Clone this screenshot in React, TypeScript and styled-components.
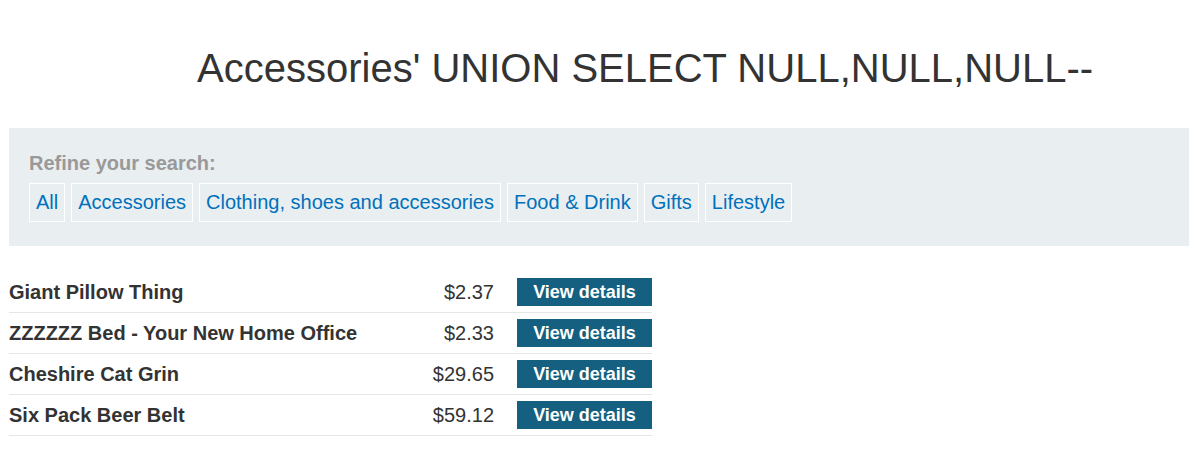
import styled, { createGlobalStyle } from "styled-components";

const GlobalStyle = createGlobalStyle`
  body {
    margin: 0;
    background: #ffffff;
    font-family: "Liberation Sans", Arial, sans-serif;
    color: #333333;
  }
`;

const Page = styled.div`
  padding-left: 9px;
`;

const Title = styled.h1`
  margin: 0;
  padding: 44px 0 36px 188px;
  font-size: 40px;
  line-height: 48px;
  font-weight: normal;
  color: #333333;
`;

const FilterPanel = styled.section`
  background-color: #e9eef1;
  padding: 24px 20px 24px;
`;

const FilterLabel = styled.div`
  font-size: 20px;
  line-height: 23px;
  font-weight: bold;
  color: #999999;
  margin-bottom: 8px;
`;

const FilterList = styled.div`
  display: flex;
  flex-wrap: wrap;
  gap: 6px;
`;

const FilterLink = styled.a`
  display: block;
  border: 1px solid #ffffff;
  padding: 7px 6px;
  font-size: 20px;
  line-height: 23px;
  color: #0071bc;
  text-decoration: none;
  cursor: pointer;
`;

const ProductTable = styled.div`
  width: 643px;
  margin-top: 26px;
`;

const ProductRow = styled.div`
  display: grid;
  grid-template-columns: 1fr auto 135px;
  column-gap: 23px;
  align-items: center;
  padding: 6px 0 6px;
  height: 28px;
  border-bottom: 1px solid #e6e6e6;
  box-sizing: content-box;
`;

const ProductName = styled.div`
  font-size: 20px;
  font-weight: bold;
  color: #333333;
`;

const Price = styled.div`
  font-size: 20px;
  color: #333333;
  text-align: right;
`;

const DetailsButton = styled.a`
  display: flex;
  align-items: center;
  justify-content: center;
  height: 28px;
  background-color: #155f80;
  color: #ffffff;
  font-size: 18px;
  font-weight: bold;
  text-decoration: none;
  cursor: pointer;
`;

const filters = [
  "All",
  "Accessories",
  "Clothing, shoes and accessories",
  "Food & Drink",
  "Gifts",
  "Lifestyle",
];

const products = [
  { name: "Giant Pillow Thing", price: "$2.37" },
  { name: "ZZZZZZ Bed - Your New Home Office", price: "$2.33" },
  { name: "Cheshire Cat Grin", price: "$29.65" },
  { name: "Six Pack Beer Belt", price: "$59.12" },
];

const App = () => {
  return (
    <Page>
      <GlobalStyle />
      <Title>Accessories' UNION SELECT NULL,NULL,NULL--</Title>
      <FilterPanel>
        <FilterLabel>Refine your search:</FilterLabel>
        <FilterList>
          {filters.map((f) => (
            <FilterLink key={f}>{f}</FilterLink>
          ))}
        </FilterList>
      </FilterPanel>
      <ProductTable>
        {products.map((p) => (
          <ProductRow key={p.name}>
            <ProductName>{p.name}</ProductName>
            <Price>{p.price}</Price>
            <DetailsButton>View details</DetailsButton>
          </ProductRow>
        ))}
      </ProductTable>
    </Page>
  );
};

export default App;
